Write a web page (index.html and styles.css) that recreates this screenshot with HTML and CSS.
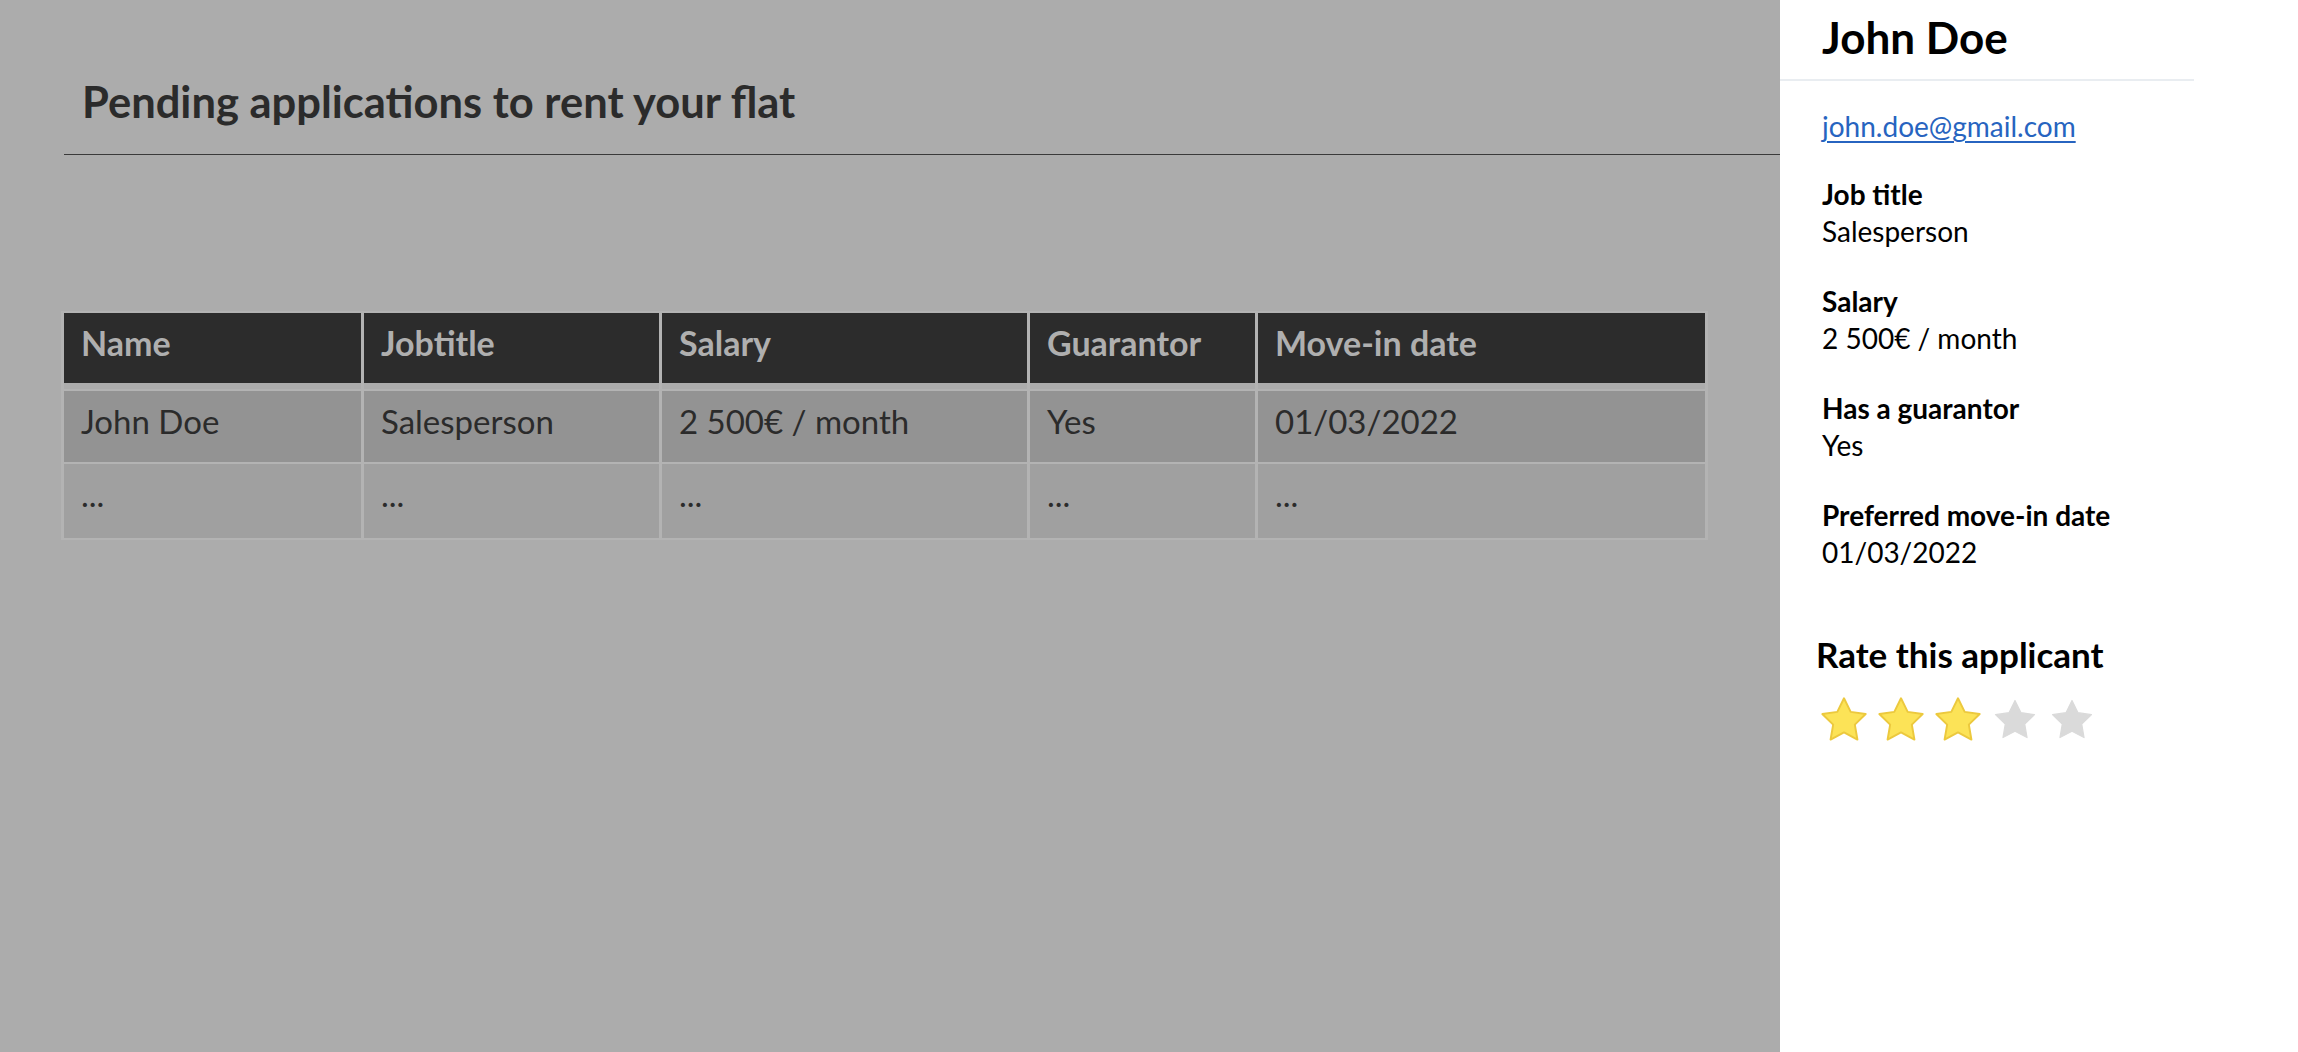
FILE: index.html
```html
<!DOCTYPE html>
<html lang="en">
<head>
<meta charset="utf-8">
<title>Pending applications</title>
<link rel="stylesheet" href="styles.css">
</head>
<body>
<div class="app">
  <main class="main">
    <header class="page-head">
      <h1 class="page-title">Pending applications to rent your flat</h1>
    </header>
    <table class="apps">
      <colgroup>
        <col class="c-name"><col class="c-job"><col class="c-salary"><col class="c-guar"><col class="c-date">
      </colgroup>
      <thead>
        <tr><th>Name</th><th>Jobtitle</th><th>Salary</th><th>Guarantor</th><th>Move-in date</th></tr>
      </thead>
      <tbody>
        <tr class="row-selected"><td>John Doe</td><td>Salesperson</td><td>2 500€ / month</td><td>Yes</td><td>01/03/2022</td></tr>
        <tr class="row-more"><td>...</td><td>...</td><td>...</td><td>...</td><td>...</td></tr>
      </tbody>
    </table>
  </main>
  <aside class="panel">
    <div class="panel-head">
      <h2 class="panel-name">John Doe</h2>
    </div>
    <div class="panel-body">
      <a class="email" href="mailto:john.doe@gmail.com">john.doe@gmail.com</a>
      <div class="field">
        <div class="field-label">Job title</div>
        <div class="field-value">Salesperson</div>
      </div>
      <div class="field">
        <div class="field-label">Salary</div>
        <div class="field-value">2 500€ / month</div>
      </div>
      <div class="field">
        <div class="field-label">Has a guarantor</div>
        <div class="field-value">Yes</div>
      </div>
      <div class="field">
        <div class="field-label">Preferred move-in date</div>
        <div class="field-value">01/03/2022</div>
      </div>
      <h3 class="rate-title">Rate this applicant</h3>
      <div class="stars">
        <svg class="star on" viewBox="1.4 1.4 21.2 20.3"><polygon points="12 2 15.09 8.26 22 9.27 17 14.14 18.18 21.02 12 17.77 5.82 21.02 7 14.14 2 9.27 8.91 8.26"/></svg>
        <svg class="star on" viewBox="1.4 1.4 21.2 20.3"><polygon points="12 2 15.09 8.26 22 9.27 17 14.14 18.18 21.02 12 17.77 5.82 21.02 7 14.14 2 9.27 8.91 8.26"/></svg>
        <svg class="star on" viewBox="1.4 1.4 21.2 20.3"><polygon points="12 2 15.09 8.26 22 9.27 17 14.14 18.18 21.02 12 17.77 5.82 21.02 7 14.14 2 9.27 8.91 8.26"/></svg>
        <svg class="star off" viewBox="1.4 1.4 21.2 20.3"><polygon points="12 2 15.09 8.26 22 9.27 17 14.14 18.18 21.02 12 17.77 5.82 21.02 7 14.14 2 9.27 8.91 8.26"/></svg>
        <svg class="star off" viewBox="1.4 1.4 21.2 20.3"><polygon points="12 2 15.09 8.26 22 9.27 17 14.14 18.18 21.02 12 17.77 5.82 21.02 7 14.14 2 9.27 8.91 8.26"/></svg>
      </div>
    </div>
  </aside>
</div>
</body>
</html>
```
FILE: styles.css
```css
* { box-sizing: border-box; }
html, body { margin: 0; padding: 0; }
body {
  width: 2298px;
  height: 1052px;
  overflow: hidden;
  background: #acacac;
  font-family: Lato, "Open Sans", sans-serif;
  color: #2b2b2b;
}
.app {
  display: flex;
  height: 100%;
}
.main {
  flex: 1;
  padding-left: 64px;
  background: #acacac;
}
.page-head {
  margin-top: 77px;
  padding: 0 0 29px 18px;
  border-bottom: 1px solid #3a3a3a;
}
.page-title {
  margin: 0;
  font-size: 43.5px;
  line-height: 48px;
  font-weight: 700;
  color: #2b2b2b;
}
.apps {
  margin: 156px 0 0 -3px;
  border-collapse: separate;
  border-spacing: 3px 2px;
  table-layout: fixed;
  width: 1647px;
  font-size: 33px;
  background: #b3b3b3;
}
.c-name { width: 297px; }
.c-job { width: 295px; }
.c-salary { width: 365px; }
.c-guar { width: 225px; }
.c-date { width: 447px; }
.apps th, .apps td {
  text-align: left;
  vertical-align: top;
  padding: 11px 17px 22px;
  line-height: 38px;
  white-space: nowrap;
}
.apps th {
  background: #2c2c2c;
  color: #afafaf;
  font-size: 34px;
  font-weight: 700;
  padding-bottom: 21px;
  border-bottom: 6px solid #acacac;
  background-clip: padding-box;
}
.row-selected td { background: #939393; }
.row-more td { background: #a0a0a0; padding-bottom: 25px; }
.panel {
  width: 518px;
  flex: none;
  background: #fff;
  color: #000;
}
.panel-head {
  width: 414px;
  padding: 11px 0 16px 42px;
  border-bottom: 2px solid #e9edf1;
}
.panel-name {
  margin: 0;
  font-size: 44px;
  line-height: 52px;
  font-weight: 700;
}
.panel-body {
  padding: 27px 0 0 42px;
  display: flex;
  flex-direction: column;
  align-items: flex-start;
  gap: 33px;
  font-size: 28px;
  line-height: 37px;
}
.email {
  margin-bottom: -2px;
  color: #2764c0;
  text-decoration: underline;
  text-decoration-thickness: 2px;
  text-underline-offset: 4px;
}
.field-label { font-weight: 700; }
.rate-title {
  margin: 30px 0 0 -6px;
  font-size: 35px;
  line-height: 40px;
  font-weight: 700;
}
.stars {
  margin: -10px 0 0 -1px;
  display: flex;
  gap: 11px;
}
.star { width: 46px; height: 44px; }
.star.on polygon { fill: #fce357; stroke: #ecc93e; stroke-width: 0.9; stroke-linejoin: round; }
.star.off polygon { fill: #dadada; stroke: #dadada; stroke-width: 0.6; stroke-linejoin: round; transform: scale(0.9); transform-origin: 12px 12px; }
```
